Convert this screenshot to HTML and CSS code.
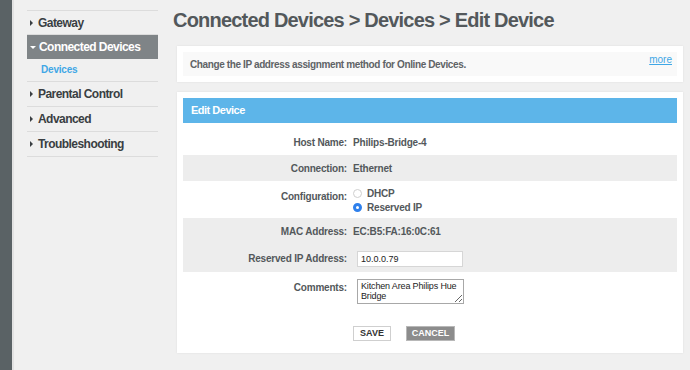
FILE: index.html
```html
<!DOCTYPE html>
<html>
<head>
<meta charset="UTF-8">
<title>Edit Device</title>
<link rel="stylesheet" href="styles.css">
</head>
<body>
	<div class="rail"></div>
	<ul class="nav">
		<li><a class="item"><span class="arrow"></span>Gateway</a></li>
		<li class="open">
			<a class="item"><span class="arrow down"></span>Connected Devices</a>
			<a class="sub">Devices</a>
		</li>
		<li><a class="item"><span class="arrow"></span>Parental Control</a></li>
		<li><a class="item"><span class="arrow"></span>Advanced</a></li>
		<li><a class="item"><span class="arrow"></span>Troubleshooting</a></li>
	</ul>
	<div class="main">
		<h1>Connected Devices &gt; Devices &gt; Edit Device</h1>
		<div class="panel">
			<div class="info">
				<p>Change the IP address assignment method for Online Devices.</p>
				<a class="more">more</a>
			</div>
		</div>
		<div class="panel card">
			<h2>Edit Device</h2>
			<div class="form">
				<div class="row">
					<div class="label">Host Name:</div>
					<div class="value">Philips-Bridge-4</div>
				</div>
				<div class="row odd">
					<div class="label">Connection:</div>
					<div class="value">Ethernet</div>
				</div>
				<div class="row config">
					<div class="label">Configuration:</div>
					<div class="value">
						<div class="radio"><span class="dot"></span>DHCP</div>
						<div class="radio"><span class="dot on"></span>Reserved IP</div>
					</div>
				</div>
				<div class="row odd">
					<div class="label">MAC Address:</div>
					<div class="value">EC:B5:FA:16:0C:61</div>
				</div>
				<div class="row odd field">
					<div class="label">Reserved IP Address:</div>
					<div class="value"><input type="text" value="10.0.0.79"></div>
				</div>
				<div class="row field comments">
					<div class="label">Comments:</div>
					<div class="value"><textarea>Kitchen Area Philips Hue Bridge</textarea></div>
				</div>
				<div class="actions">
					<a class="btn">SAVE</a>
					<a class="btn cancel">CANCEL</a>
				</div>
			</div>
		</div>
	</div>
</body>
</html>
```

FILE: styles.css
```css
		html, body {
			height: 100%;
		}
		body {
			margin: 0;
			display: flex;
			align-items: flex-start;
			background: #f0f0f0;
			font-family: "Liberation Sans", Arial, sans-serif;
			font-weight: bold;
			color: #53585b;
		}
		.rail {
			width: 12px;
			height: 100%;
			flex: none;
			background: #5a6265;
			border-right: 2px solid #e2e2e2;
		}
		.nav {
			list-style: none;
			margin: 10px 0 0 13px;
			padding: 0;
			width: 131px;
			flex: none;
			border-top: 1px solid #dcdcdc;
		}
		.nav li {
			border-bottom: 1px solid #dcdcdc;
		}
		.item {
			display: flex;
			align-items: center;
			height: 24px;
			padding-left: 3px;
			font-size: 12px;
			letter-spacing: -0.55px;
			white-space: nowrap;
			color: #393e42;
			cursor: pointer;
		}
		.nav li:first-child .item {
			height: 23px;
		}
		.open .item {
			background: #7f8487;
			color: #fff;
		}
		.arrow {
			width: 0;
			height: 0;
			margin-right: 5px;
			border-top: 3px solid transparent;
			border-bottom: 3px solid transparent;
			border-left: 3px solid #393e42;
		}
		.arrow.down {
			margin-right: 3px;
			border-left: 3px solid transparent;
			border-right: 3px solid transparent;
			border-top: 3px solid #fff;
			border-bottom: 0;
		}
		.sub {
			display: block;
			height: 22px;
			line-height: 22px;
			padding-left: 14px;
			font-size: 10px;
			letter-spacing: -0.2px;
			color: #3fa7e6;
		}
		.main {
			flex: 1;
			margin: 0 7px 0 15px;
			padding-top: 9px;
		}
		h1 {
			margin: 0 0 14px;
			font-size: 20px;
			letter-spacing: -0.8px;
			color: #53585b;
		}
		.panel {
			margin-left: 4px;
			padding: 6px;
			background: #fff;
			box-shadow: 0 0 2px rgba(0, 0, 0, .08);
		}
		.info {
			display: flex;
			justify-content: space-between;
			align-items: flex-start;
			height: 24px;
			padding: 0 5px 0 7px;
			background: #f9f9f9;
		}
		.info p {
			margin: 0;
			line-height: 25px;
			font-size: 10px;
			letter-spacing: -0.38px;
			color: #5f6366;
		}
		.more {
			margin-top: 2px;
			font-size: 10px;
			font-weight: normal;
			color: #3fa7e6;
			text-decoration: underline;
		}
		.card {
			margin-top: 10px;
			padding-bottom: 12px;
		}
		h2 {
			margin: 0;
			height: 25px;
			line-height: 25px;
			padding-left: 8px;
			background: #5db5e9;
			color: #fff;
			font-size: 11px;
			letter-spacing: -0.5px;
		}
		.form {
			padding-top: 6px;
			font-size: 10px;
			letter-spacing: -0.2px;
		}
		.row {
			display: flex;
			align-items: center;
			height: 26px;
		}
		.row.odd {
			background: #ededed;
		}
		.label {
			flex: none;
			width: 164px;
			text-align: right;
			padding-right: 6px;
			color: #53585b;
		}
		.value {
			color: #53585b;
		}
		.config {
			height: 37px;
			align-items: flex-start;
		}
		.config .label {
			padding-top: 10px;
		}
		.config .value {
			padding-top: 5px;
		}
		.radio {
			display: flex;
			align-items: center;
			height: 14px;
		}
		.dot {
			box-sizing: border-box;
			width: 9px;
			height: 9px;
			margin-right: 5px;
			border: 1px solid #cfcfcf;
			border-radius: 50%;
			background: #fff;
		}
		.dot.on {
			border: 3px solid #2f80ec;
		}
		.field {
			height: 28px;
		}
		.field .label {
			padding-right: 10px;
		}
		.field .value {
			padding-top: 1px;
		}
		input, textarea {
			box-sizing: border-box;
			margin: 0;
			font-family: "Liberation Sans", Arial, sans-serif;
			color: #222;
			border: 1px solid #d6d6d6;
			background: #fff;
		}
		input {
			width: 106px;
			height: 16px;
			padding: 0 3px;
			font-size: 9px;
			font-weight: normal;
		}
		textarea {
			display: block;
			width: 107px;
			height: 25px;
			padding: 1px 2px 1px 3px;
			font-size: 9px;
			line-height: 10px;
			letter-spacing: -0.15px;
			font-weight: normal;
			border-color: #a8a8a8;
			resize: both;
		}
		.comments {
			height: auto;
			align-items: flex-start;
			padding-top: 7px;
		}
		.comments .label {
			padding-top: 3px;
		}
		.comments .value {
			padding-top: 0;
		}
		.actions {
			display: flex;
			justify-content: center;
			gap: 15px;
			margin-top: 22px;
			padding-right: 52px;
		}
		.btn {
			box-sizing: border-box;
			width: 38px;
			height: 15px;
			line-height: 13px;
			text-align: center;
			border: 1px solid #cfcfcf;
			background: #fff;
			color: #333;
			font-size: 9px;
			letter-spacing: 0;
			cursor: pointer;
		}
		.btn.cancel {
			width: 49px;
			border-color: #b8b8b8;
			background: #8c8c8c;
			color: #fff;
		}
```
